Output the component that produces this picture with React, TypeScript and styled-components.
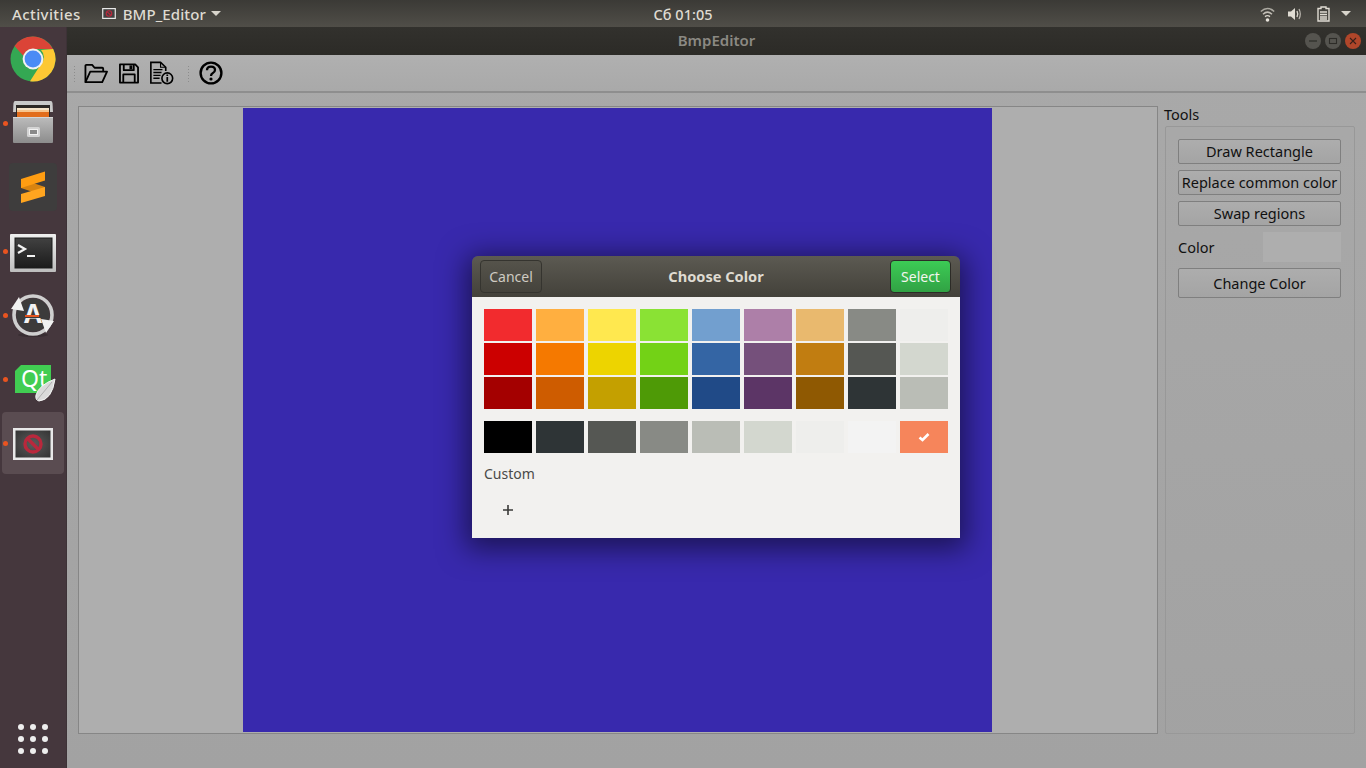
import React from 'react';
import styled, { createGlobalStyle } from 'styled-components';

const UI_FONT = `'Noto Sans', 'Open Sans', sans-serif`;

const GlobalStyle = createGlobalStyle`
  html, body {
    margin: 0;
    padding: 0;
    height: 100%;
    overflow: hidden;
    background: #a8a8a8;
    font-family: ${UI_FONT};
  }
  #root { height: 100%; }
  * { box-sizing: border-box; }
`;

const PALETTE = [
  ['#f22b2e', '#ffaf40', '#ffe84f', '#8ae234', '#729fcf', '#ad7fa8', '#e9b96e', '#888a85', '#eeeeec'],
  ['#cc0000', '#f57900', '#edd400', '#73d216', '#3465a4', '#75507b', '#c17d11', '#555753', '#d3d7cf'],
  ['#a40000', '#ce5c00', '#c4a000', '#4e9a06', '#204a87', '#5c3566', '#8f5902', '#2e3436', '#babdb6'],
];
const GREYS = ['#000000', '#2e3436', '#555753', '#888a85', '#babdb6', '#d3d7cf', '#eeeeec', '#f3f3f3'];

function ChromeIcon() {
  return (
    <svg width="46" height="46" viewBox="0 0 46 46">
      <circle cx="23" cy="23" r="22.5" fill="#34a853" />
      <path d="M23 .5 A22.5 22.5 0 0 1 43 13 L23 13 A10 10 0 0 0 13.5 20 L4.5 10 A22.5 22.5 0 0 1 23 .5 Z" fill="#db4437" />
      <path d="M43.2 13 A22.5 22.5 0 0 1 20 45.3 L31 28 A10 10 0 0 0 31 14 Z" fill="#fdc834" />
      <circle cx="23" cy="23" r="10.4" fill="#f1f1f1" />
      <circle cx="23" cy="23" r="8.4" fill="#4a8bf5" />
    </svg>
  );
}

function FilesIcon() {
  return (
    <svg width="42" height="46" viewBox="0 0 42 46">
      <defs>
        <linearGradient id="cabFront" x1="0" y1="0" x2="0" y2="1">
          <stop offset="0" stopColor="#bcbcbc" />
          <stop offset="1" stopColor="#8c8c8c" />
        </linearGradient>
      </defs>
      <path d="M3 1 H39 Q40 1 40.5 3 L41 12 H1 L1.5 3 Q2 1 3 1 Z" fill="#c9c9c9" />
      <rect x="4" y="5" width="34" height="13" fill="#2c2825" />
      <rect x="5" y="8" width="32" height="2" fill="#f5e3c8" />
      <rect x="5" y="10" width="32" height="2" fill="#f7c58e" />
      <rect x="5" y="12" width="32" height="5" fill="#e26d1c" />
      <rect x="1" y="17" width="40" height="26" rx="1" fill="url(#cabFront)" />
      <rect x="1" y="17" width="40" height="1" fill="#d6d6d6" />
      <rect x="15" y="27" width="13" height="10" rx="1.5" fill="#d4d4d4" />
      <rect x="17.5" y="29.5" width="8" height="5" fill="#8a8a8a" stroke="#f2f2f2" />
    </svg>
  );
}

function SublimeIcon() {
  return (
    <svg width="48" height="48" viewBox="0 0 48 48">
      <rect width="48" height="48" rx="4" fill="#3e3d3d" />
      <path d="M12 16 L36 24 V33 L12 25 Z" fill="#d98410" />
      <path d="M36 8.5 V17.5 L12 25 V16 Z" fill="#ff9d12" />
      <path d="M36 24 V33 L12 40 V31 Z" fill="#ffa51f" />
    </svg>
  );
}

function TerminalIcon() {
  return (
    <svg width="46" height="42" viewBox="0 -4 46 42">
      <defs>
        <linearGradient id="termFrame" x1="0" y1="0" x2="0" y2="1">
          <stop offset="0" stopColor="#efefef" />
          <stop offset="1" stopColor="#bdbdbd" />
        </linearGradient>
        <linearGradient id="termScreen" x1="0" y1="0" x2="0" y2="1">
          <stop offset="0" stopColor="#414141" />
          <stop offset="1" stopColor="#1b1b1b" />
        </linearGradient>
      </defs>
      <rect width="46" height="38" rx="1" fill="url(#termFrame)" />
      <rect x="5" y="4" width="37" height="30" fill="url(#termScreen)" stroke="#1a1a1a" />
      <path d="M8 11 L15 15 L8 19" fill="none" stroke="#f2f2f2" strokeWidth="2.2" />
      <rect x="17" y="21" width="8" height="2" fill="#f2f2f2" />
    </svg>
  );
}

function UpdaterIcon() {
  return (
    <svg width="46" height="46" viewBox="0 0 46 46">
      <ellipse cx="23" cy="43" rx="15" ry="2" fill="#000" opacity="0.18" />
      <circle cx="23" cy="23" r="16.5" fill="#3c3b3b" />
      <circle cx="23" cy="23" r="19" fill="none" stroke="#cfcfcf" strokeWidth="3.6" />
      <path d="M1 17 L14 19 L9 5 Z" fill="#f2f2f2" />
      <path d="M44 29 L31 27 L36 41 Z" fill="#f2f2f2" />
      <text x="23" y="31" textAnchor="middle" fontFamily="'Noto Sans', sans-serif" fontWeight="700" fontSize="26" fill="#f2f2f2">
        A
      </text>
      <rect x="14" y="23" width="18" height="3" fill="#3c3b3b" />
      <rect x="15" y="23" width="14" height="2" fill="#e5541f" />
    </svg>
  );
}

function QtIcon() {
  return (
    <svg width="46" height="46" viewBox="-5 -9 46 46">
      <path d="M6 0 H36 V22 L30 28 H0 V6 Z" fill="#41cd52" />
      <text x="6" y="22" fontFamily="'Noto Sans', sans-serif" fontSize="23" fill="#fff">
        Qt
      </text>
      <path d="M40 14 Q37 35 24 36 Q20 35 21 30 Q24 20 40 14 Z" fill="#dadada" stroke="#f6f6f6" />
      <path d="M37 17 L22 35" stroke="#a3a3a3" strokeWidth="0.8" />
    </svg>
  );
}

function AppIcon({ small }: { small?: boolean }) {
  if (small) {
    return (
      <svg width="14" height="11" viewBox="0 0 40 32">
        <rect width="40" height="32" fill="#e8e8e8" />
        <rect x="3.5" y="3.5" width="33" height="25" fill="#414141" />
        <circle cx="20" cy="16" r="8" fill="none" stroke="#b9283c" strokeWidth="3.4" />
        <path d="M14.5 10.5 L25.5 21.5" stroke="#b9283c" strokeWidth="3.4" />
      </svg>
    );
  }
  return (
    <svg width="40" height="34" viewBox="0 -2 40 34">
      <defs>
        <radialGradient id="appScreen" cx="0.5" cy="0.5" r="0.7">
          <stop offset="0" stopColor="#5c5c5c" />
          <stop offset="1" stopColor="#333333" />
        </radialGradient>
      </defs>
      <rect width="40" height="32" fill="#e8e8e8" />
      <rect x="2.5" y="2.5" width="35" height="27" fill="url(#appScreen)" />
      <circle cx="20" cy="16" r="8" fill="none" stroke="#b9283c" strokeWidth="3.4" />
      <path d="M14.5 10.5 L25.5 21.5" stroke="#b9283c" strokeWidth="3.4" />
    </svg>
  );
}

const DOCK = [
  { icon: <ChromeIcon />, running: false, active: false },
  { icon: <FilesIcon />, running: true, active: false },
  { icon: <SublimeIcon />, running: false, active: false },
  { icon: <TerminalIcon />, running: true, active: false },
  { icon: <UpdaterIcon />, running: true, active: false },
  { icon: <QtIcon />, running: true, active: false },
  { icon: <AppIcon />, running: true, active: true },
];

export default function App() {
  return (
    <>
      <GlobalStyle />
      <Screen>
        <TopBar>
          <TopLeft>
            <TopLabel $wide>Activities</TopLabel>
            <AppMenu>
              <AppIcon small />
              <TopLabel>BMP_Editor</TopLabel>
              <Caret />
            </AppMenu>
          </TopLeft>
          <Clock>Сб 01:05</Clock>
          <Tray>
            <svg width="15" height="16" viewBox="0 0 15 16" fill="none" stroke="#d9d5cc">
              <path d="M.8 5.5 Q7.5 -.5 14.2 5.5" strokeWidth="1.5" opacity="0.7" />
              <path d="M3 8.2 Q7.5 4 12 8.2" strokeWidth="1.5" opacity="0.85" />
              <path d="M5 10.6 Q7.5 8.6 10 10.6" strokeWidth="1.4" />
              <circle cx="7.5" cy="14" r="1.8" fill="#e8e4dc" stroke="none" />
            </svg>
            <svg width="18" height="16" viewBox="0 0 18 16" fill="none" stroke="#d9d5cc">
              <path d="M1 5.5 H4 L8 2 V14 L4 10.5 H1 Z" fill="#e0dcd3" stroke="none" />
              <path d="M10 5 Q11.5 8 10 11" strokeWidth="1.4" />
              <path d="M12 3 Q14.6 8 12 13" strokeWidth="1.2" opacity="0.8" />
            </svg>
            <svg width="14" height="16" viewBox="0 0 14 16" fill="none" stroke="#e0dcd3">
              <path d="M4 1 H9 V2.5 H12 V15 H1 V2.5 H4 Z" strokeWidth="1.4" />
              <path d="M3 6 H10 M3 8.5 H10 M3 11 H10 M3 13 H10" strokeWidth="1.3" />
            </svg>
            <Caret />
          </Tray>
        </TopBar>
        <Desktop>
          <Dock>
            {DOCK.map((item, i) => (
              <DockItem key={i} $active={item.active}>
                {item.running && <RunDot />}
                {item.icon}
              </DockItem>
            ))}
            <AppGrid>
              {Array.from({ length: 9 }).map((_, i) => (
                <GridDot key={i} />
              ))}
            </AppGrid>
          </Dock>
          <Window>
            <TitleBar>
              <WindowTitle>BmpEditor</WindowTitle>
              <WindowControls>
                <WinButton>
                  <svg width="10" height="10" viewBox="0 0 10 10"><path d="M1 5 H9" stroke="#2d2c28" strokeWidth="1.2" /></svg>
                </WinButton>
                <WinButton>
                  <svg width="10" height="10" viewBox="0 0 10 10"><rect x="1.5" y="2.5" width="7" height="5" fill="none" stroke="#2d2c28" strokeWidth="1.1" /></svg>
                </WinButton>
                <WinButton $close>
                  <svg width="10" height="10" viewBox="0 0 10 10"><path d="M2 2 L8 8 M8 2 L2 8" stroke="#38201a" strokeWidth="1.1" /></svg>
                </WinButton>
              </WindowControls>
            </TitleBar>
            <Toolbar>
              <Handle />
              <ToolIcon $width={24}>
                <svg width="25" height="21" viewBox="0 0 25 21" fill="none" stroke="#000" strokeWidth="1.9" strokeLinejoin="round">
                  <path d="M1.5 19 V2.5 Q1.5 1.5 2.5 1.5 H8.5 L11 4.5 H19 Q20 4.5 20 5.5 V8" />
                  <path d="M1.5 19.5 L6.5 8.5 H24 L19 19.5 Z" />
                </svg>
              </ToolIcon>
              <ToolIcon $width={20}>
                <svg width="21" height="21" viewBox="0 0 21 21" fill="none" stroke="#000" strokeWidth="1.9" strokeLinejoin="round">
                  <path d="M1 1 H17 L20 4 V20 H1 Z" />
                  <path d="M5 1 V7 H15.5 V1" />
                  <path d="M4.5 20 V11.5 H16.5 V20" />
                  <rect x="11" y="2" width="3" height="4" fill="#000" stroke="none" />
                </svg>
              </ToolIcon>
              <ToolIcon $width={24}>
                <svg width="25" height="24" viewBox="0 0 25 24" fill="none" stroke="#000" strokeWidth="1.7">
                  <path d="M12 22.4 H.9 V.9 H11 L16.4 6 V10" />
                  <path d="M11 1 V6 H16" strokeWidth="1.2" />
                  <path d="M3.5 8.5 H13 M3.5 11.5 H12 M3.5 14.5 H11 M3.5 17.5 H10" strokeWidth="1.5" />
                  <circle cx="18" cy="17.5" r="5.6" fill="#adadad" stroke="#000" strokeWidth="1.7" />
                  <path d="M18 16.2 V21 M18 13.6 V15" stroke="#000" strokeWidth="1.8" />
                </svg>
              </ToolIcon>
              <Handle $narrow />
              <ToolIcon $width={24}>
                <svg width="24" height="24" viewBox="0 0 24 24" fill="none" stroke="#000">
                  <circle cx="12" cy="12" r="10.4" strokeWidth="2.4" />
                  <path d="M8 9.2 Q8 5.6 12 5.6 Q16 5.6 16 9 Q16 11 13.6 12.2 Q12 13 12 15" strokeWidth="2.3" />
                  <circle cx="12" cy="18" r="1.6" fill="#000" stroke="none" />
                </svg>
              </ToolIcon>
            </Toolbar>
            <Workspace>
              <CanvasFrame>
                <BitmapImage />
              </CanvasFrame>
              <ToolsPanel>
                <ToolsLabel>Tools</ToolsLabel>
                <ToolsBox>
                  <PushButton>Draw Rectangle</PushButton>
                  <PushButton>Replace common color</PushButton>
                  <PushButton>Swap regions</PushButton>
                  <ColorRow>
                    <ColorLabel>Color</ColorLabel>
                    <ColorPreview />
                  </ColorRow>
                  <PushButton $tall>Change Color</PushButton>
                </ToolsBox>
              </ToolsPanel>
            </Workspace>
          </Window>
        </Desktop>
        <Dialog>
          <DialogHeader>
            <HeaderButton>Cancel</HeaderButton>
            <DialogTitle>Choose Color</DialogTitle>
            <HeaderButton $primary>Select</HeaderButton>
          </DialogHeader>
          <DialogBody>
            <SwatchGrid>
              {PALETTE.flat().map((c) => (
                <Swatch key={c} $color={c} />
              ))}
            </SwatchGrid>
            <GreyRow>
              {GREYS.map((c) => (
                <Swatch key={c} $color={c} />
              ))}
              <Swatch $color="#f6855b">
                <svg width="12" height="10" viewBox="0 0 12 10">
                  <path d="M1.5 5.5 L4.5 8 L10.5 2" fill="none" stroke="#fff" strokeWidth="2.6" />
                </svg>
              </Swatch>
            </GreyRow>
            <CustomLabel>Custom</CustomLabel>
            <AddCustom>
              <svg width="10" height="10" viewBox="0 0 10 10">
                <path d="M5 0 V10 M0 5 H10" stroke="#3a3a38" strokeWidth="1.6" />
              </svg>
            </AddCustom>
          </DialogBody>
        </Dialog>
      </Screen>
    </>
  );
}

const Screen = styled.div`
  position: relative;
  width: 1366px;
  height: 768px;
  display: flex;
  flex-direction: column;
  overflow: hidden;
`;

const TopBar = styled.header`
  height: 27px;
  flex: none;
  position: relative;
  display: flex;
  align-items: center;
  justify-content: space-between;
  padding: 0 15px 0 12px;
  background: linear-gradient(#3b3a36, #504e48);
  color: #dfdbd2;
`;

const TopLeft = styled.div`
  display: flex;
  align-items: center;
  gap: 21px;
`;

const TopLabel = styled.span<{ $wide?: boolean }>`
  font-size: 15px;
  font-weight: 500;
  letter-spacing: ${(p) => (p.$wide ? '0.4px' : '0.1px')};
`;

const AppMenu = styled.div`
  display: flex;
  align-items: center;
  gap: 7px;
`;

const Caret = styled.span`
  width: 0;
  height: 0;
  margin-left: -2px;
  border-left: 5px solid transparent;
  border-right: 5px solid transparent;
  border-top: 5px solid #d8d4cb;
`;

const Clock = styled.span`
  position: absolute;
  left: 0;
  right: 0;
  text-align: center;
  font-size: 14.5px;
  font-weight: 500;
  pointer-events: none;
`;

const Tray = styled.div`
  display: flex;
  align-items: center;
  gap: 12px;
`;

const Desktop = styled.div`
  flex: 1;
  min-height: 0;
  display: flex;
`;

const Dock = styled.nav`
  width: 67px;
  flex: none;
  display: flex;
  flex-direction: column;
  gap: 2px;
  padding: 1px 0 0 2px;
  background: #45373d;
  border-right: 1px solid #3d3237;
`;

const DockItem = styled.div<{ $active?: boolean }>`
  position: relative;
  width: 62px;
  height: 62px;
  display: flex;
  align-items: center;
  justify-content: center;
  border-radius: 4px;
  background: ${(p) => (p.$active ? '#5a4c51' : 'transparent')};
`;

const RunDot = styled.span`
  position: absolute;
  left: 1px;
  top: 28.5px;
  width: 5px;
  height: 5px;
  border-radius: 50%;
  background: #e95420;
`;

const AppGrid = styled.div`
  margin: auto 0 14px 16px;
  display: grid;
  grid-template-columns: repeat(3, 6px);
  gap: 6px;
`;

const GridDot = styled.span`
  width: 6px;
  height: 6px;
  border-radius: 50%;
  background: #eeeeee;
`;

const Window = styled.main`
  flex: 1;
  min-width: 0;
  display: flex;
  flex-direction: column;
  background: linear-gradient(#a9a9a9, #a2a2a2);
`;

const TitleBar = styled.div`
  position: relative;
  height: 28px;
  flex: none;
  display: flex;
  align-items: center;
  justify-content: center;
  padding-bottom: 2px;
  background: linear-gradient(#32312d, #2c2b27);
`;

const WindowTitle = styled.span`
  font-size: 15px;
  font-weight: 600;
  color: #8b8983;
`;

const WindowControls = styled.div`
  position: absolute;
  right: 5px;
  top: 6px;
  display: flex;
  gap: 4px;
`;

const WinButton = styled.span<{ $close?: boolean }>`
  width: 16px;
  height: 16px;
  display: flex;
  align-items: center;
  justify-content: center;
  border-radius: 50%;
  background: ${(p) => (p.$close ? '#b0462a' : '#55544f')};
`;

const Toolbar = styled.div`
  height: 38px;
  flex: none;
  display: flex;
  align-items: center;
  padding-left: 6px;
  background: linear-gradient(#b0b0b0, #a9a9a9);
  border-bottom: 2px solid #8e8e8e;
`;

const Handle = styled.span<{ $narrow?: boolean }>`
  width: 3px;
  height: 17px;
  margin-right: ${(p) => (p.$narrow ? '9px' : '8px')};
  margin-left: ${(p) => (p.$narrow ? '2px' : '0')};
  background-image: radial-gradient(circle, #8c8c8c 0.7px, transparent 0.9px);
  background-size: 3px 3px;
`;

const ToolIcon = styled.span<{ $width: number }>`
  width: ${(p) => p.$width}px;
  height: 24px;
  margin-right: 11px;
  display: flex;
  align-items: center;
  justify-content: center;
`;

const Workspace = styled.div`
  flex: 1;
  min-height: 0;
  display: flex;
  gap: 6px;
  padding: 13px 11px 34px 11px;
`;

const CanvasFrame = styled.div`
  width: 1080px;
  height: 628px;
  flex: none;
  display: flex;
  justify-content: center;
  padding-top: 1px;
  background: #aeaeae;
  border: 1px solid #868686;
`;

const BitmapImage = styled.div`
  width: 749px;
  height: 624px;
  margin-left: -2px;
  background: #3829ad;
`;

const ToolsPanel = styled.aside`
  flex: 1;
  min-width: 0;
  display: flex;
  flex-direction: column;
`;

const ToolsLabel = styled.div`
  height: 20px;
  font-size: 14.5px;
  line-height: 17px;
  color: #111;
`;

const ToolsBox = styled.div`
  flex: 1;
  width: 190px;
  margin-left: 1px;
  display: flex;
  flex-direction: column;
  gap: 6px;
  padding: 12px 13px 0 12px;
  border: 1px solid #989898;
  border-radius: 2px;
`;

const PushButton = styled.button<{ $tall?: boolean }>`
  width: 163px;
  height: ${(p) => (p.$tall ? '30px' : '25px')};
  flex: none;
  padding: 0 0 ${(p) => (p.$tall ? '0' : '2px')};
  font-family: ${UI_FONT};
  font-size: 14.5px;
  color: #111;
  white-space: nowrap;
  background: linear-gradient(#adadad, #a4a4a4);
  border: 1px solid #7f7f7f;
  border-radius: 2px;
`;

const ColorRow = styled.div`
  display: flex;
  align-items: center;
  justify-content: space-between;
  width: 163px;
  height: 30px;
`;

const ColorLabel = styled.span`
  font-size: 14.5px;
  color: #111;
`;

const ColorPreview = styled.span`
  width: 78px;
  height: 30px;
  background: #aeaeae;
`;

const Dialog = styled.section`
  position: absolute;
  left: 472px;
  top: 256px;
  width: 488px;
  height: 282px;
  display: flex;
  flex-direction: column;
  border-radius: 6px 6px 0 0;
  box-shadow: 0 5px 28px 6px rgba(0, 0, 0, 0.5);
`;

const DialogHeader = styled.div`
  height: 41px;
  flex: none;
  display: flex;
  align-items: center;
  justify-content: space-between;
  padding: 0 9px 0 8px;
  border-radius: 6px 6px 0 0;
  background: linear-gradient(#5c5a52, #43413a);
`;

const DialogTitle = styled.span`
  font-size: 14.6px;
  font-weight: 700;
  line-height: 18px;
  margin-top: -2px;
  color: #dfdbd2;
`;

const HeaderButton = styled.button<{ $primary?: boolean }>`
  height: 33px;
  width: ${(p) => (p.$primary ? '61px' : '62px')};
  padding: 0;
  font-family: ${UI_FONT};
  font-size: 14px;
  color: ${(p) => (p.$primary ? '#f3f5ef' : '#cfcbc2')};
  border-radius: 4px;
  border: 1px solid ${(p) => (p.$primary ? '#2c2b27' : '#35342f')};
  background: ${(p) =>
    p.$primary ? 'linear-gradient(#3ccb55, #31a244)' : 'linear-gradient(#55534b, #45433c)'};
`;

const DialogBody = styled.div`
  flex: 1;
  padding: 12px 12px 0;
  background: #f2f1ef;
`;

const SwatchGrid = styled.div`
  display: grid;
  grid-template-columns: repeat(9, 48px);
  grid-auto-rows: 32px;
  gap: 2px 4px;
`;

const GreyRow = styled.div`
  display: grid;
  grid-template-columns: repeat(9, 48px);
  grid-auto-rows: 32px;
  gap: 4px;
  margin-top: 12px;
`;

const Swatch = styled.div<{ $color: string }>`
  display: flex;
  align-items: center;
  justify-content: center;
  background: ${(p) => p.$color};
`;

const CustomLabel = styled.div`
  margin-top: 11px;
  font-size: 14px;
  line-height: 20px;
  color: #4a4a48;
`;

const AddCustom = styled.div`
  width: 48px;
  height: 32px;
  margin-top: 10px;
  display: flex;
  align-items: center;
  justify-content: center;
`;
